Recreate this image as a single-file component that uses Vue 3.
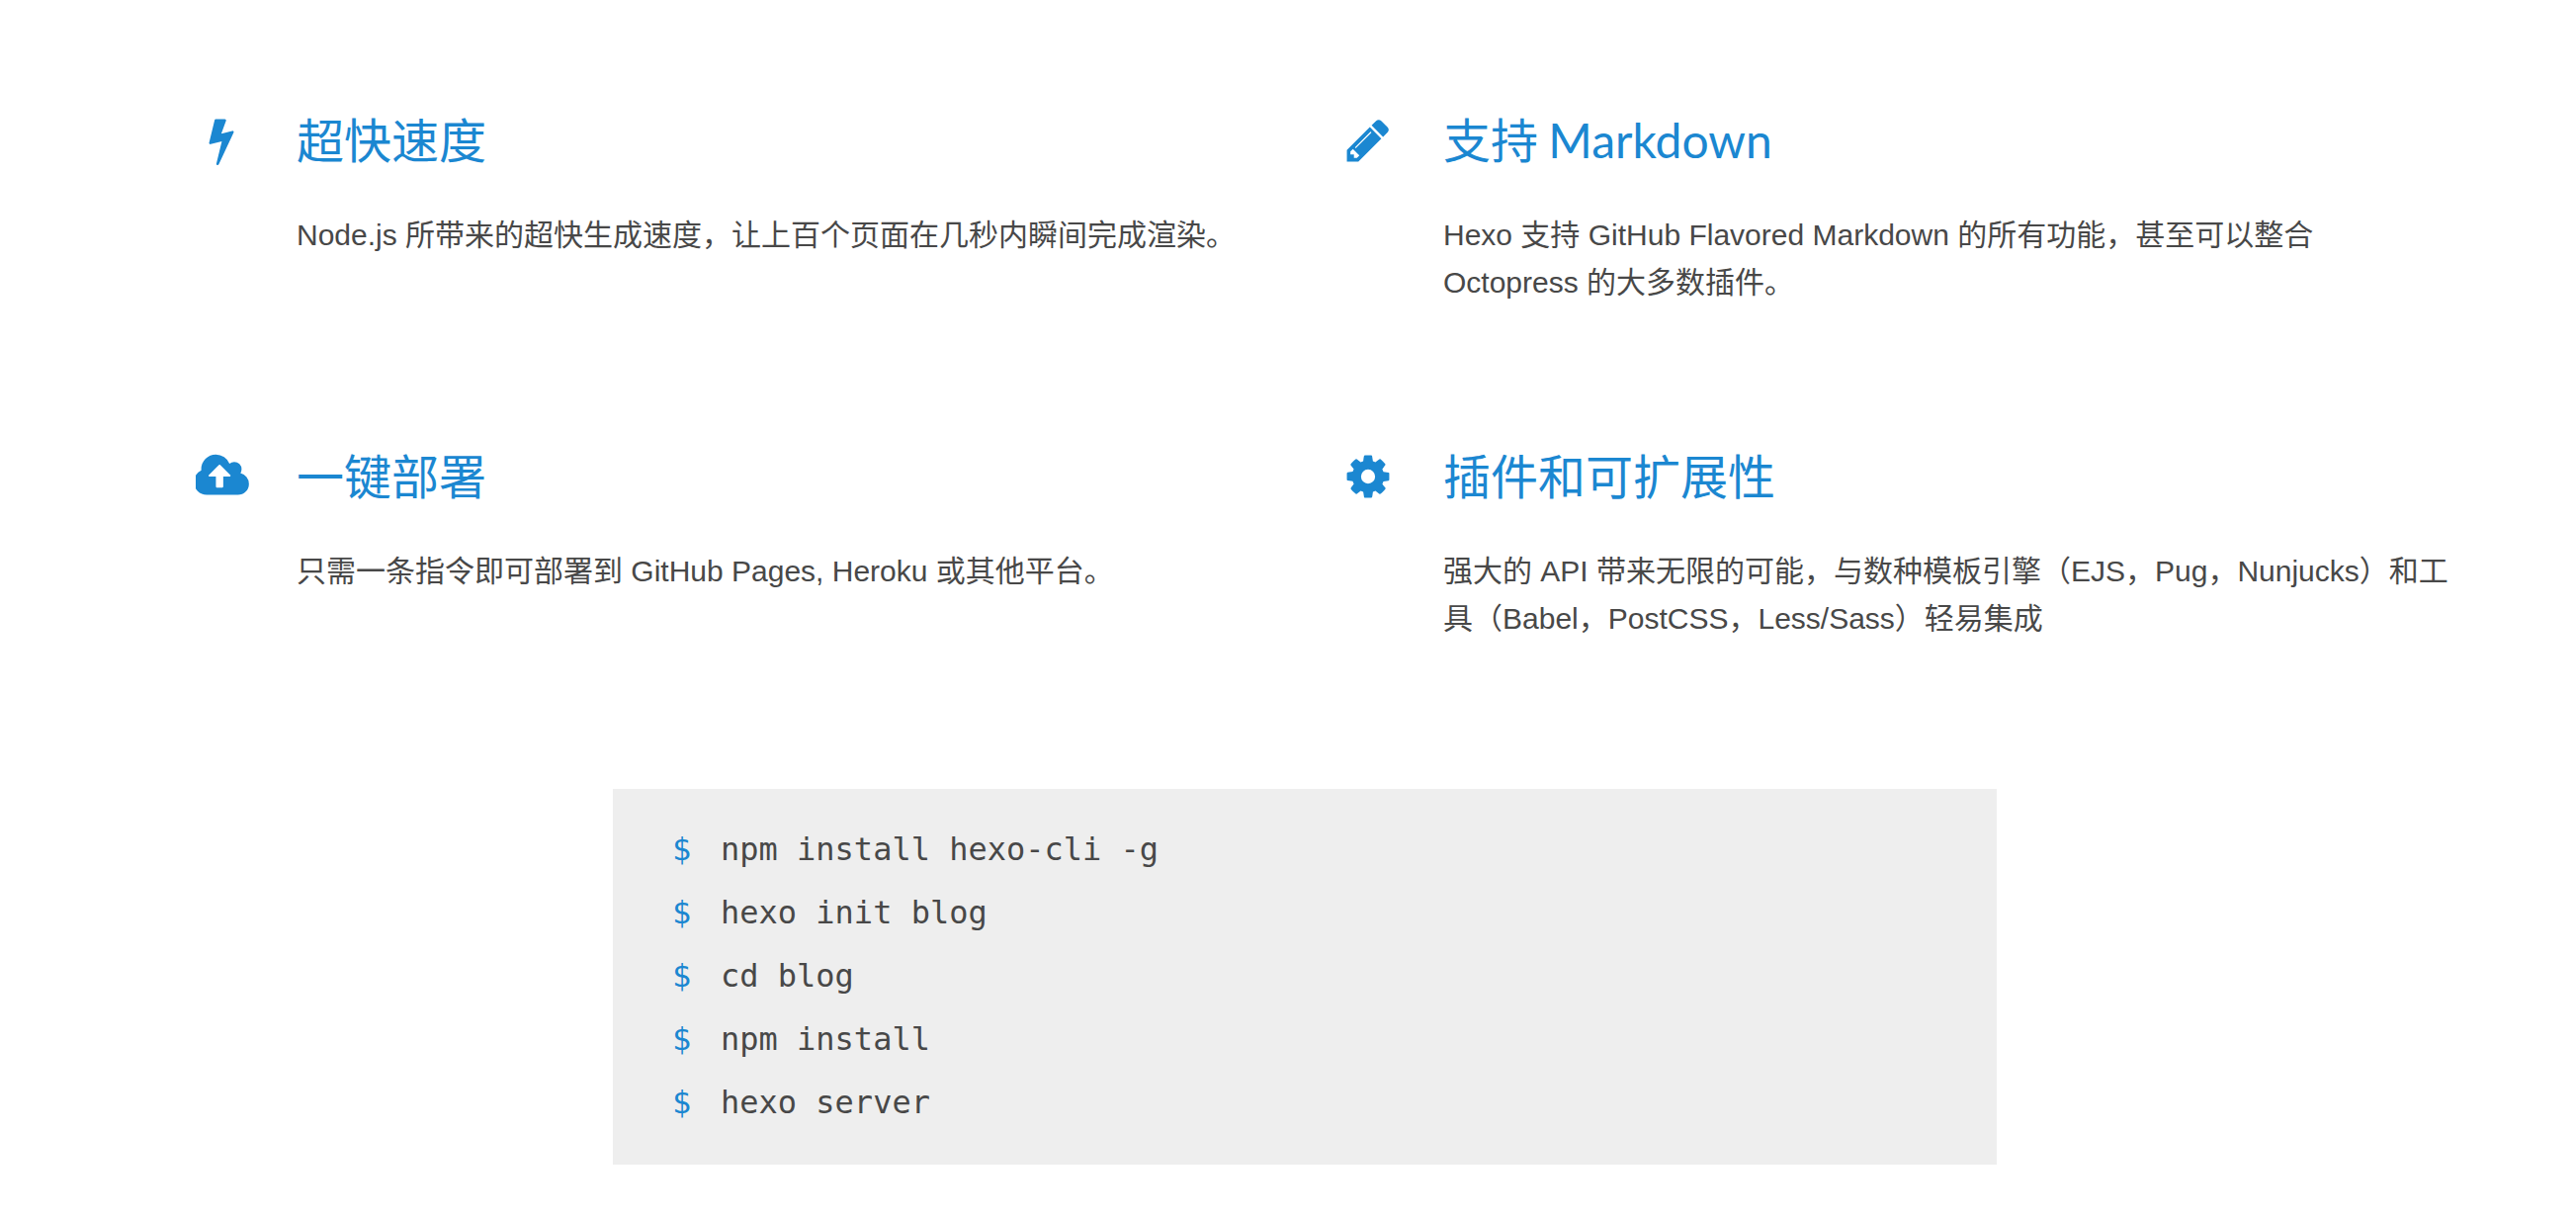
<script setup>
const features = [
  { key: 'bolt', view: '0 0 1792 1792', title: '超快速度', text: 'Node.js 所带来的超快生成速度，让上百个页面在几秒内瞬间完成渲染。', path: 'M1333 566q18 20 7 44l-540 1157q-13 25-42 25-4 0-14-2-17-5-25.5-19t-4.5-30l197-808-406 101q-4 1-12 1-18 0-31-11-18-15-13-39l201-825q4-14 16-23t28-9h328q19 0 32 12.5t13 29.5q0 8-5 18l-171 463 396-98q8-2 12-2 19 0 34 15z' },
  { key: 'pencil', view: '0 0 1792 1792', title: '支持 Markdown', text: 'Hexo 支持 GitHub Flavored Markdown 的所有功能，甚至可以整合 Octopress 的大多数插件。', path: 'M491 1536l91-91-235-235-91 91v107h128v128h107zm523-928q0-22-22-22-10 0-17 7l-542 542q-7 7-7 17 0 22 22 22 10 0 17-7l542-542q7-7 7-17zm-54-192l416 416-832 832h-416v-416zm683 96q0 53-37 90l-166 166-416-416 166-165q36-38 90-38 53 0 91 38l235 234q37 39 37 91z' },
  { key: 'cloud', view: '0 0 1920 1792', title: '一键部署', text: '只需一条指令即可部署到 GitHub Pages, Heroku 或其他平台。', path: 'M1216 864q0-14-9-23l-352-352q-9-9-23-9t-23 9l-351 351q-10 12-10 24 0 14 9 23t23 9h224v352q0 13 9.5 22.5t22.5 9.5h192q13 0 22.5-9.5t9.5-22.5v-352h224q13 0 22.5-9.5t9.5-22.5zm640 288q0 159-112.5 271.5t-271.5 112.5h-1088q-185 0-316.5-131.5t-131.5-316.5q0-130 70-240t188-165q-2-30-2-43 0-212 150-362t362-150q156 0 285.5 87t188.5 231q71-62 166-62 106 0 181 75t75 181q0 76-41 138 130 31 213.5 135.5t83.5 238.5z' },
  { key: 'cog', view: '0 0 1792 1792', title: '插件和可扩展性', text: '强大的 API 带来无限的可能，与数种模板引擎（EJS，Pug，Nunjucks）和工具（Babel，PostCSS，Less/Sass）轻易集成', path: 'M1152 896q0-106-75-181t-181-75-181 75-75 181 75 181 181 75 181-75 75-181zm512-109v222q0 12-8 23t-20 13l-185 28q-19 54-39 91 35 50 107 138 10 12 10 25t-9 23q-27 37-99 108t-94 71q-12 0-26-9l-138-108q-44 23-91 38-16 136-29 186-7 28-36 28h-222q-14 0-24.5-8.5t-11.5-21.5l-28-184q-49-16-90-37l-141 107q-10 9-25 9-14 0-25-11-126-114-165-168-7-10-7-23 0-12 8-23 15-21 51-66.5t54-70.5q-27-50-41-99l-183-27q-13-2-21-12.5t-8-23.5v-222q0-12 8-23t19-13l186-28q14-46 39-92-40-57-107-138-10-12-10-24 0-10 9-23 26-36 98.5-107.5t94.5-71.5q13 0 26 10l138 107q44-23 91-38 16-136 29-186 7-28 36-28h222q14 0 24.5 8.5t11.5 21.5l28 184q49 16 90 37l142-107q9-9 24-9 13 0 25 10 129 119 165 170 7 8 7 22 0 12-8 23-15 21-51 66.5t-54 70.5q26 50 41 98l183 28q13 2 21 12.5t8 23.5z' }
]
const commands = ['npm install hexo-cli -g', 'hexo init blog', 'cd blog', 'npm install', 'hexo server']
</script>

<template>
  <main class="page">
    <section class="features">
      <article v-for="f in features" :key="f.key" class="feature">
        <div class="icon-box">
          <svg class="icon" :class="f.key" :viewBox="f.view" aria-hidden="true"><path :d="f.path" /></svg>
        </div>
        <div class="copy">
          <h3 class="title">{{ f.title }}</h3>
          <p class="text">{{ f.text }}</p>
        </div>
      </article>
    </section>
    <pre class="code"><span v-for="c in commands" :key="c" class="line"><span class="prompt">$</span><span>{{ c }}</span></span></pre>
  </main>
</template>

<style>
html, body { margin: 0; background: #fff; }
</style>

<style scoped>
.page {
  width: 2606px;
  height: 1234px;
  overflow: hidden;
  box-sizing: border-box;
  padding-top: 104px;
}
.features {
  display: grid;
  grid-template-columns: 1160px 1160px;
  grid-auto-rows: 340px;
  padding-left: 196px;
}
.feature {
  display: flex;
  gap: 44px;
  align-items: flex-start;
}
.icon-box {
  flex: 0 0 60px;
  height: 76px;
  display: flex;
  align-items: center;
  justify-content: center;
}
.icon {
  height: 50px;
  margin-right: 4px;
  fill: #1b87d1;
}
.icon.cloud {
  height: 52px;
  margin-right: 0;
}
.copy { width: 1020px; }
.title {
  margin: 0;
  font: 400 48px/76px Lato, "Noto Sans CJK SC", sans-serif;
  word-spacing: -2px;
  color: #1b87d1;
}
.text {
  margin: 34px 0 0;
  font: 400 30px/48px "Liberation Sans", "Noto Sans CJK SC", sans-serif;
  color: #484848;
}
.code {
  box-sizing: border-box;
  width: 1400px;
  height: 380px;
  margin: 14px 0 0 620px;
  padding: 29px 60px;
  background: #eee;
  font: 400 32px/64px "DejaVu Sans Mono", monospace;
  color: #484848;
  display: flex;
  flex-direction: column;
}
.line { display: flex; height: 64px; }
.prompt { color: #1b87d1; width: 49px; }
</style>
